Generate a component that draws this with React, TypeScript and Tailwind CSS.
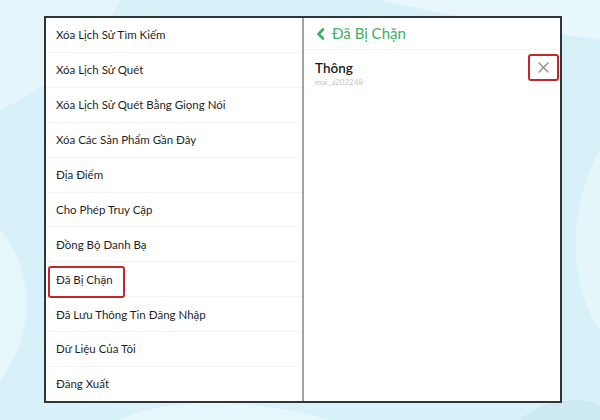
import React from 'react';

const items = [
  'Xóa Lịch Sử Tìm Kiếm',
  'Xóa Lịch Sử Quét',
  'Xóa Lịch Sử Quét Bằng Giọng Nói',
  'Xóa Các Sản Phẩm Gần Đây',
  'Địa Điểm',
  'Cho Phép Truy Cập',
  'Đồng Bộ Danh Bạ',
  'Đã Bị Chặn',
  'Đã Lưu Thông Tin Đăng Nhập',
  'Dữ Liệu Của Tôi',
  'Đăng Xuất',
];

const Backdrop = () => (
  <svg className="absolute inset-0" width="600" height="420" viewBox="0 0 600 420">
    <rect width="600" height="420" fill="#d8f1f8" />
    <path d="M0 0 H120 C90 60 40 90 0 110 Z" fill="#e4f6fb" />
    <path d="M0 230 C30 260 40 330 0 380 Z" fill="#e6f7fb" />
    <path d="M380 0 H600 V40 C540 30 470 20 380 0 Z" fill="#e7f7fc" />
    <path d="M600 150 C570 200 565 280 600 330 Z" fill="#e5f6fb" />
    <path d="M120 420 C170 395 260 400 330 420 Z" fill="#e6f7fb" />
    <path d="M520 420 C540 400 580 395 600 405 V420 Z" fill="#cdeaf3" />
  </svg>
);

const App = () => {
  return (
    <div className="relative w-[600px] h-[420px] overflow-hidden font-['Lato',sans-serif]">
      <Backdrop />
      <div className="relative pt-[16px] pl-[44px]">
        <div className="flex w-[518px] h-[387px] bg-white border-2 border-[#30353a]">
          <div className="flex flex-col w-[258px] border-r-2 border-[#a3a3a3]">
            {items.map((label, i) => (
              <div
                key={label}
                className={`relative flex-1 flex items-center pl-[10px] text-[11.5px] text-[#1f1f1f] ${
                  i < items.length - 1 ? 'border-b border-[#f4f4f4]' : ''
                }`}
              >
                {label}
                {label === 'Đã Bị Chặn' && (
                  <span className="absolute left-[2px] top-[4px] w-[77px] h-[32px] border-2 border-[#c1272d] rounded-[3px]" />
                )}
              </div>
            ))}
          </div>
          <div className="flex-1 flex flex-col">
            <div className="flex items-center gap-[7px] h-[32px] pl-[12px] border-b border-[#f5f5f5] text-[#3fae64]">
              <svg width="9" height="12" viewBox="0 0 9 12">
                <path d="M7 1.5 L2.5 6 L7 10.5" fill="none" stroke="#3fae64" strokeWidth="2.6" strokeLinecap="round" strokeLinejoin="round" />
              </svg>
              <span className="text-[15px]">Đã Bị Chặn</span>
            </div>
            <div className="flex items-start justify-between pl-[11px] pr-[1px] pt-[4px]">
              <div className="flex flex-col pt-[6px]">
                <span className="text-[13.5px] font-semibold text-[#1c1c1c] leading-[16px]">Thông</span>
                <span className="text-[8px] text-[#c4c4c4] leading-[12px]">mai_a202248</span>
              </div>
              <div className="flex items-center justify-center w-[31px] h-[27px] border-2 border-[#c1272d] rounded-[3px]">
                <svg width="11" height="11" viewBox="0 0 11 11">
                  <path d="M1 1 L10 10 M10 1 L1 10" stroke="#8a8a8a" strokeWidth="1.3" strokeLinecap="round" />
                </svg>
              </div>
            </div>
          </div>
        </div>
      </div>
    </div>
  );
};

export default App;
